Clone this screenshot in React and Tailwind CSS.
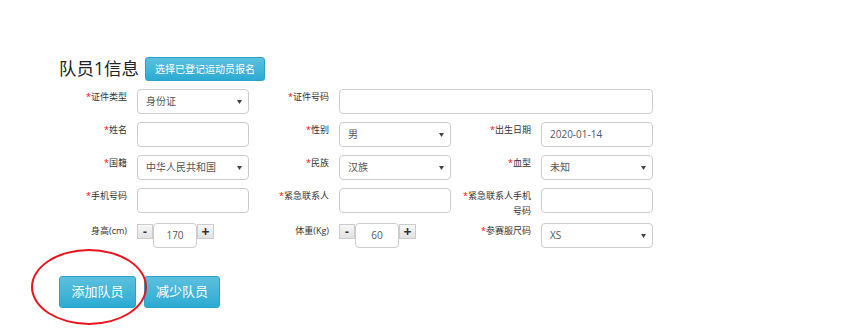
import React from "react";

const font = "font-['Open_Sans','Noto_Sans_CJK_SC',sans-serif]";

function Label({ text, required = true }) {
  return (
    <div className="w-[80px] shrink-0 text-right text-[9px] leading-[15px] text-[#333]">
      {required && <span className="text-[#f00]">*</span>}
      {text}
    </div>
  );
}

function TextBox({ value = "", wide = false }) {
  return (
    <div
      className={`ml-[10px] h-[25px] ${wide ? "w-[314px]" : "w-[112px]"} shrink-0 rounded-[4px] border border-[#ccc] bg-white px-[8px] flex items-center text-[10px] text-[#555]`}
    >
      {value}
    </div>
  );
}

function Select({ value }) {
  return (
    <div className="ml-[10px] h-[25px] w-[112px] shrink-0 rounded-[4px] border border-[#ccc] bg-white pl-[8px] pr-[6px] flex items-center justify-between text-[10px] text-[#555]">
      <span>{value}</span>
      <svg width="5" height="4" viewBox="0 0 5 4" className="fill-[#444]">
        <path d="M0 0h5L2.5 4z" />
      </svg>
    </div>
  );
}

function Stepper({ value }) {
  return (
    <div className="ml-[10px] flex items-start shrink-0">
      <button className="mt-[1px] h-[15px] w-[16px] border border-[#ccc] bg-linear-to-b from-[#f7f7f7] to-[#e2e2e2] flex items-center justify-center text-[12px] font-bold leading-none text-[#333]">
        -
      </button>
      <div className="h-[25px] w-[44px] rounded-[4px] border border-[#ccc] bg-white flex items-center justify-center text-[10px] text-[#555]">
        {value}
      </div>
      <button className="mt-[1px] h-[15px] w-[17px] border border-[#ccc] bg-linear-to-b from-[#f7f7f7] to-[#e2e2e2] flex items-center justify-center text-[14px] font-bold leading-none text-[#333]">
        +
      </button>
    </div>
  );
}

function InfoButton({ children, className = "" }) {
  return (
    <button
      className={`rounded-[3px] border border-[#28a4c9] bg-linear-to-b from-[#5bc0de] to-[#2aabd2] text-white ${className}`}
    >
      {children}
    </button>
  );
}

export default function App() {
  return (
    <div className={`relative h-[329px] w-[865px] overflow-hidden bg-white pl-[47px] pt-[57px] ${font}`}>
      {/* Title */}
      <div className="flex items-center pl-[12px] h-[24px]">
        <h2 className="text-[17.5px] leading-none text-[#222]">队员1信息</h2>
        <InfoButton className="ml-[6px] h-[24px] px-[9px] text-[10px]">
          选择已登记运动员报名
        </InfoButton>
      </div>

      {/* Form */}
      <div className="mt-[8px] flex flex-col">
        <div className="flex h-[33px] items-start">
          <Label text="证件类型" />
          <Select value="身份证" />
          <Label text="证件号码" />
          <TextBox wide />
        </div>
        <div className="flex h-[33px] items-start">
          <Label text="姓名" />
          <TextBox />
          <Label text="性别" />
          <Select value="男" />
          <Label text="出生日期" />
          <TextBox value="2020-01-14" />
        </div>
        <div className="flex h-[33px] items-start">
          <Label text="国籍" />
          <Select value="中华人民共和国" />
          <Label text="民族" />
          <Select value="汉族" />
          <Label text="血型" />
          <Select value="未知" />
        </div>
        <div className="flex h-[35px] items-start">
          <Label text="手机号码" />
          <TextBox />
          <Label text="紧急联系人" />
          <TextBox />
          <Label text={<>紧急联系人手机<br />号码</>} />
          <TextBox />
        </div>
        <div className="flex h-[25px] items-start">
          <Label text="身高(cm)" required={false} />
          <Stepper value="170" />
          <div className="w-[35px] shrink-0" />
          <Label text="体重(Kg)" required={false} />
          <Stepper value="60" />
          <div className="w-[35px] shrink-0" />
          <Label text="参赛服尺码" />
          <Select value="XS" />
        </div>
      </div>

      {/* Actions */}
      <div className="mt-[28px] flex gap-[8px] pl-[12px]">
        <InfoButton className="h-[32px] w-[77px] text-[13px]">添加队员</InfoButton>
        <InfoButton className="h-[32px] w-[76px] text-[13px]">减少队员</InfoButton>
      </div>

      {/* Annotation circle */}
      <div className="pointer-events-none absolute left-[31px] top-[249px] h-[76px] w-[116px] rounded-[50%] border-2 border-[#e8141b]" />
    </div>
  );
}
